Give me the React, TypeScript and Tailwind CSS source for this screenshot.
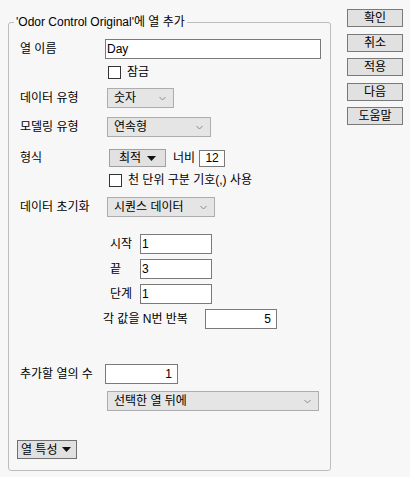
import type { ReactNode } from "react";

const font = "font-['Liberation_Sans','Noto_Sans_CJK_KR',sans-serif]";

function Chevron() {
    return (
        <svg width="7" height="5" viewBox="0 0 7 5" className="shrink-0">
            <path d="M0.5 1 L3.5 4 L6.5 1" fill="none" stroke="#8a8a8a" strokeWidth="1" />
        </svg>
    );
}

function Caret() {
    return (
        <svg width="9" height="5" viewBox="0 0 9 5" className="shrink-0">
            <path d="M0 0 H9 L4.5 5 Z" fill="#111" />
        </svg>
    );
}

function Select({ value, width }: { value: string; width: string }) {
    return (
        <div className={`${width} h-[20px] flex items-center justify-between pl-[6px] pr-[7px] bg-[#e5e5e5] border border-[#adadad]`}>
            <span>{value}</span>
            <Chevron />
        </div>
    );
}

function Field({ value, width, right }: { value: string; width: string; right?: boolean }) {
    return (
        <div className={`${width} h-[20px] flex items-center bg-white border border-[#7a7a7a] ${right ? "justify-end pr-[5px]" : "pl-[1px]"}`}>
            {value}
        </div>
    );
}

function Check({ label }: { label: string }) {
    return (
        <div className="flex items-center gap-[6px] h-[16px]">
            <span className="w-[13px] h-[13px] bg-white border border-[#333]" />
            <span>{label}</span>
        </div>
    );
}

function Row({ label, children, className = "" }: { label: string; children: ReactNode; className?: string }) {
    return (
        <div className={`flex items-center ${className}`}>
            <span className="w-[85px] shrink-0">{label}</span>
            {children}
        </div>
    );
}

export default function App() {
    const buttons = ["확인", "취소", "적용", "다음", "도움말"];

    return (
        <div className={`w-[410px] h-[477px] bg-[#f7f7f7] flex text-[12px] leading-[16px] text-black ${font}`}>
            <fieldset className="ml-[8px] mt-[14px] w-[323px] h-[457px] border border-[#bdbdbd] rounded-[3px] pl-[11px]">
                <legend className="ml-[-6px] px-[2px]">'Odor Control Original'에 열 추가</legend>

                <div className="flex flex-col">
                    <Row label="열 이름" className="mt-[9px]">
                        <Field value="Day" width="w-[216px]" />
                    </Row>
                    <div className="ml-[88px] mt-[5px]">
                        <Check label="잠금" />
                    </div>
                    <Row label="데이터 유형" className="mt-[8px]">
                        <div className="ml-[2px]"><Select value="숫자" width="w-[67px]" /></div>
                    </Row>
                    <Row label="모델링 유형" className="mt-[9px]">
                        <div className="ml-[2px]"><Select value="연속형" width="w-[104px]" /></div>
                    </Row>
                    <Row label="형식" className="mt-[12px]">
                        <div className="ml-[4px] w-[57px] h-[18px] flex items-center justify-center gap-[6px] bg-[#e1e1e1] border border-[#a0a0a0]">
                            <span>최적</span>
                            <Caret />
                        </div>
                        <span className="ml-[7px]">너비</span>
                        <div className="ml-[4px] w-[26px] h-[17px] flex items-center justify-center bg-white border border-[#7a7a7a]">12</div>
                    </Row>
                    <div className="ml-[89px] mt-[5px]">
                        <Check label="천 단위 구분 기호(,) 사용" />
                    </div>
                    <Row label="데이터 초기화" className="mt-[9px]">
                        <div className="ml-[2px]"><Select value="시퀀스 데이터" width="w-[108px]" /></div>
                    </Row>

                    <div className="flex flex-col gap-[5px] mt-[17px] ml-[90px]">
                        {[["시작", "1"], ["끝", "3"], ["단계", "1"]].map(([l, v]) => (
                            <div key={l} className="flex items-center">
                                <span className="w-[30px]">{l}</span>
                                <Field value={v} width="w-[72px]" />
                            </div>
                        ))}
                    </div>
                    <div className="flex items-center mt-[5px] ml-[83px]">
                        <span className="w-[102px]">각 값을 N번 반복</span>
                        <Field value="5" width="w-[72px]" right />
                    </div>

                    <Row label="추가할 열의 수" className="mt-[35px]">
                        <Field value="1" width="w-[73px]" right />
                    </Row>
                    <div className="mt-[7px] ml-[87px]">
                        <Select value="선택한 열 뒤에" width="w-[212px]" />
                    </div>

                    <div className="mt-[29px] ml-[-3px] w-[60px] h-[19px] flex items-center gap-[5px] pl-[3px] bg-[#e1e1e1] border border-[#707070]">
                        <span>열 특성</span>
                        <Caret />
                    </div>
                </div>
            </fieldset>

            <div className="ml-[16px] mt-[9px] flex flex-col gap-[6.5px]">
                {buttons.map((b) => (
                    <div key={b} className="w-[56px] h-[18px] flex items-center justify-center bg-[#e1e1e1] border border-[#7a7a7a]">
                        {b}
                    </div>
                ))}
            </div>
        </div>
    );
}
